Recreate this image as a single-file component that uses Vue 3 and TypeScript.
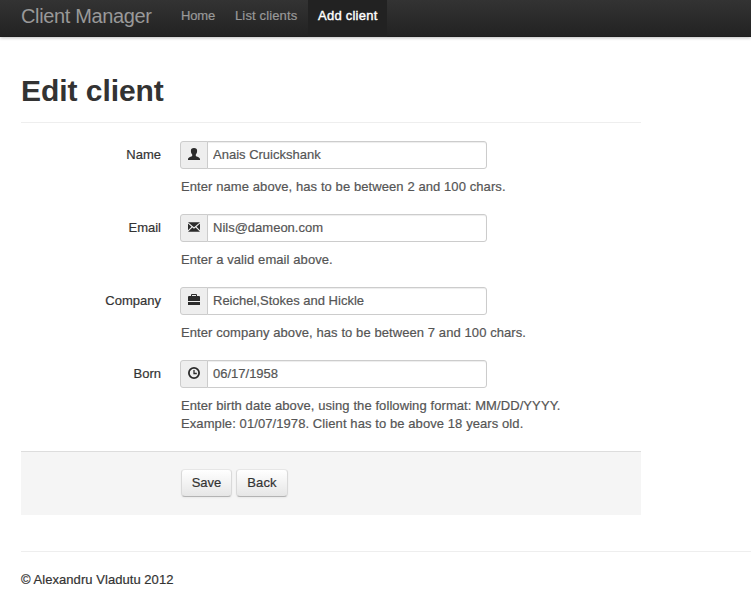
<script setup lang="ts">
import { reactive } from 'vue'

type IconName = 'user' | 'envelope' | 'briefcase' | 'time'

interface Field {
  id: string
  label: string
  icon: IconName
  value: string
  help: string[]
}

const links = [
  { text: 'Home', name: 'home', active: false },
  { text: 'List clients', name: 'list', active: false },
  { text: 'Add client', name: 'add', active: true },
]

const fields = reactive<Field[]>([
  { id: 'name', label: 'Name', icon: 'user', value: 'Anais Cruickshank', help: ['Enter name above, has to be between 2 and 100 chars.'] },
  { id: 'email', label: 'Email', icon: 'envelope', value: 'Nils@dameon.com', help: ['Enter a valid email above.'] },
  { id: 'company', label: 'Company', icon: 'briefcase', value: 'Reichel,Stokes and Hickle', help: ['Enter company above, has to be between 7 and 100 chars.'] },
  {
    id: 'born',
    label: 'Born',
    icon: 'time',
    value: '06/17/1958',
    help: ['Enter birth date above, using the following format: MM/DD/YYYY.', 'Example: 01/07/1978. Client has to be above 18 years old.'],
  },
])
</script>

<template>
  <div class="page">
    <header class="navbar">
      <a class="brand">Client Manager</a>
      <nav class="nav">
        <a v-for="link in links" :key="link.name" class="nav-link" :class="[link.name, { active: link.active }]">{{ link.text }}</a>
      </nav>
    </header>

    <main class="content">
      <div class="page-header"><h1>Edit client</h1></div>

      <form class="form" @submit.prevent>
        <div v-for="field in fields" :key="field.id" class="group">
          <label class="label" :for="field.id">{{ field.label }}</label>
          <div class="controls">
            <div class="prepend">
              <span class="addon">
                <svg v-if="field.icon === 'user'" class="icon" viewBox="0 0 14 14">
                  <path d="M7 1C4.800 1 3.900 2 3.900 3.700c0 1.600.5 2.900 1.300 3.800v1.400C4.600 9.700 1 10 1 12v1h12v-1c0-2-3.600-2.300-4.200-3.100V7.500c.8-.9 1.300-2.200 1.300-3.800C10.100 2 9.200 1 7 1z" />
                </svg>
                <svg v-else-if="field.icon === 'envelope'" class="icon" viewBox="0 0 14 14">
                  <path d="M1 2.300h12L7 7.300z M1 3.600l3.500 3.100L1 10.200z M13 3.600v6.600L9.500 6.700z M5.400 7.400L7 8.700l1.600-1.300L13 11.700H1z" />
                </svg>
                <svg v-else-if="field.icon === 'briefcase'" class="icon" viewBox="0 0 14 14">
                  <path fill-rule="evenodd" d="M4 3V2q0-1 1-1h4q1 0 1 1v1h2q1 0 1 1v4H1V4q0-1 1-1zM5 3h4V2H5zM1 9h12v3H1z" />
                </svg>
                <svg v-else class="icon" viewBox="0 0 14 14">
                  <circle cx="7" cy="7" r="5.100" class="ring" />
                  <path class="hands" d="M7 4v3.500h2.800" />
                </svg>
              </span>
              <input :id="field.id" v-model="field.value" class="input" type="text" spellcheck="false" />
            </div>
            <p class="help">
              <span v-for="line in field.help" :key="line" class="help-line">{{ line }}</span>
            </p>
          </div>
        </div>

        <div class="actions">
          <button class="btn save" type="submit">Save</button>
          <button class="btn back" type="button">Back</button>
        </div>
      </form>
    </main>

    <footer class="footer">© Alexandru Vladutu 2012</footer>
  </div>
</template>

<style>
body {
  margin: 0;
  background: #fff;
  overflow: hidden;
}
</style>

<style scoped>
.page {
  font-family: "Liberation Sans", Arial, sans-serif;
  font-size: 13px;
  line-height: 18px;
  color: #333;
  -webkit-text-stroke: 0.2px currentColor;
}

.navbar {
  display: flex;
  height: 37px;
  padding-left: 21px;
  background: linear-gradient(#333, #222);
  box-shadow: 0 1px 3px rgba(0, 0, 0, 0.25), inset 0 -1px 0 rgba(0, 0, 0, 0.1);
}

.brand {
  width: 150px;
  font-size: 20px;
  line-height: 33px;
  letter-spacing: -0.36px;
  color: #999;
  -webkit-text-stroke: 0;
}

.nav {
  display: flex;
}

.nav-link {
  box-sizing: border-box;
  padding: 7px 0 12px 10px;
  white-space: nowrap;
  color: #999;
}

.home {
  width: 54px;
  letter-spacing: -0.15px;
}

.list {
  width: 83px;
  letter-spacing: 0.14px;
}

.add {
  width: 79px;
  letter-spacing: 0.24px;
}

.nav-link.active {
  color: #fff;
  background: #222;
  -webkit-text-stroke: 0.4px #fff;
}

.content {
  width: 620px;
  margin-left: 21px;
  padding-top: 36px;
}

.page-header {
  padding-bottom: 13px;
  border-bottom: 1px solid #eee;
}

h1 {
  margin: 0;
  font-size: 30px;
  line-height: 36px;
  font-weight: bold;
  letter-spacing: -0.05px;
  -webkit-text-stroke: 0;
}

.form {
  padding-top: 18px;
}

.group {
  display: flex;
  gap: 20px;
  margin-bottom: 18px;
}

.label {
  width: 140px;
  padding-top: 5px;
  text-align: right;
}

.prepend {
  display: flex;
  margin-left: -1px;
}

.addon {
  box-sizing: border-box;
  width: 28px;
  height: 28px;
  padding: 5px 6px;
  border: 1px solid #ccc;
  border-radius: 3px 0 0 3px;
  background: #eee;
}

.icon {
  display: block;
  width: 14px;
  height: 14px;
  fill: #2b2b2b;
}

.ring,
.hands {
  fill: none;
  stroke: #2b2b2b;
  stroke-width: 1.8;
}

.hands {
  stroke-width: 1.3;
}

.input {
  box-sizing: border-box;
  width: 280px;
  height: 28px;
  margin: 0 0 0 -1px;
  padding: 3px 5px 5px;
  border: 1px solid #ccc;
  border-radius: 0 3px 3px 0;
  outline: 0;
  box-shadow: inset 0 1px 1px rgba(0, 0, 0, 0.075);
  font: inherit;
  color: #555;
  background: #fff;
  -webkit-text-stroke: 0.2px #555;
}

.help {
  margin: 9px 0 0;
  letter-spacing: 0.085px;
  color: #555;
  -webkit-text-stroke: 0.2px #555;
}

.help-line {
  display: block;
  white-space: nowrap;
}

.actions {
  display: flex;
  gap: 4px;
  padding: 17px 0 18px 160px;
  border-top: 1px solid #ddd;
  background: #f5f5f5;
}

.btn {
  box-sizing: border-box;
  height: 28px;
  padding: 4px 0;
  border: 1px solid #ccc;
  border-color: #e6e6e6 #d9d9d9 #b3b3b3;
  border-radius: 4px;
  background: linear-gradient(#fff, #e6e6e6);
  box-shadow: inset 0 1px 0 rgba(255, 255, 255, 0.2), 0 1px 2px rgba(0, 0, 0, 0.05);
  font: inherit;
  color: #333;
}

.save {
  width: 51px;
}

.back {
  width: 52px;
  letter-spacing: 0.15px;
}

.footer {
  margin: 36px 0 0 21px;
  padding-top: 19px;
  border-top: 1px solid #eee;
  letter-spacing: 0.05px;
}
</style>
